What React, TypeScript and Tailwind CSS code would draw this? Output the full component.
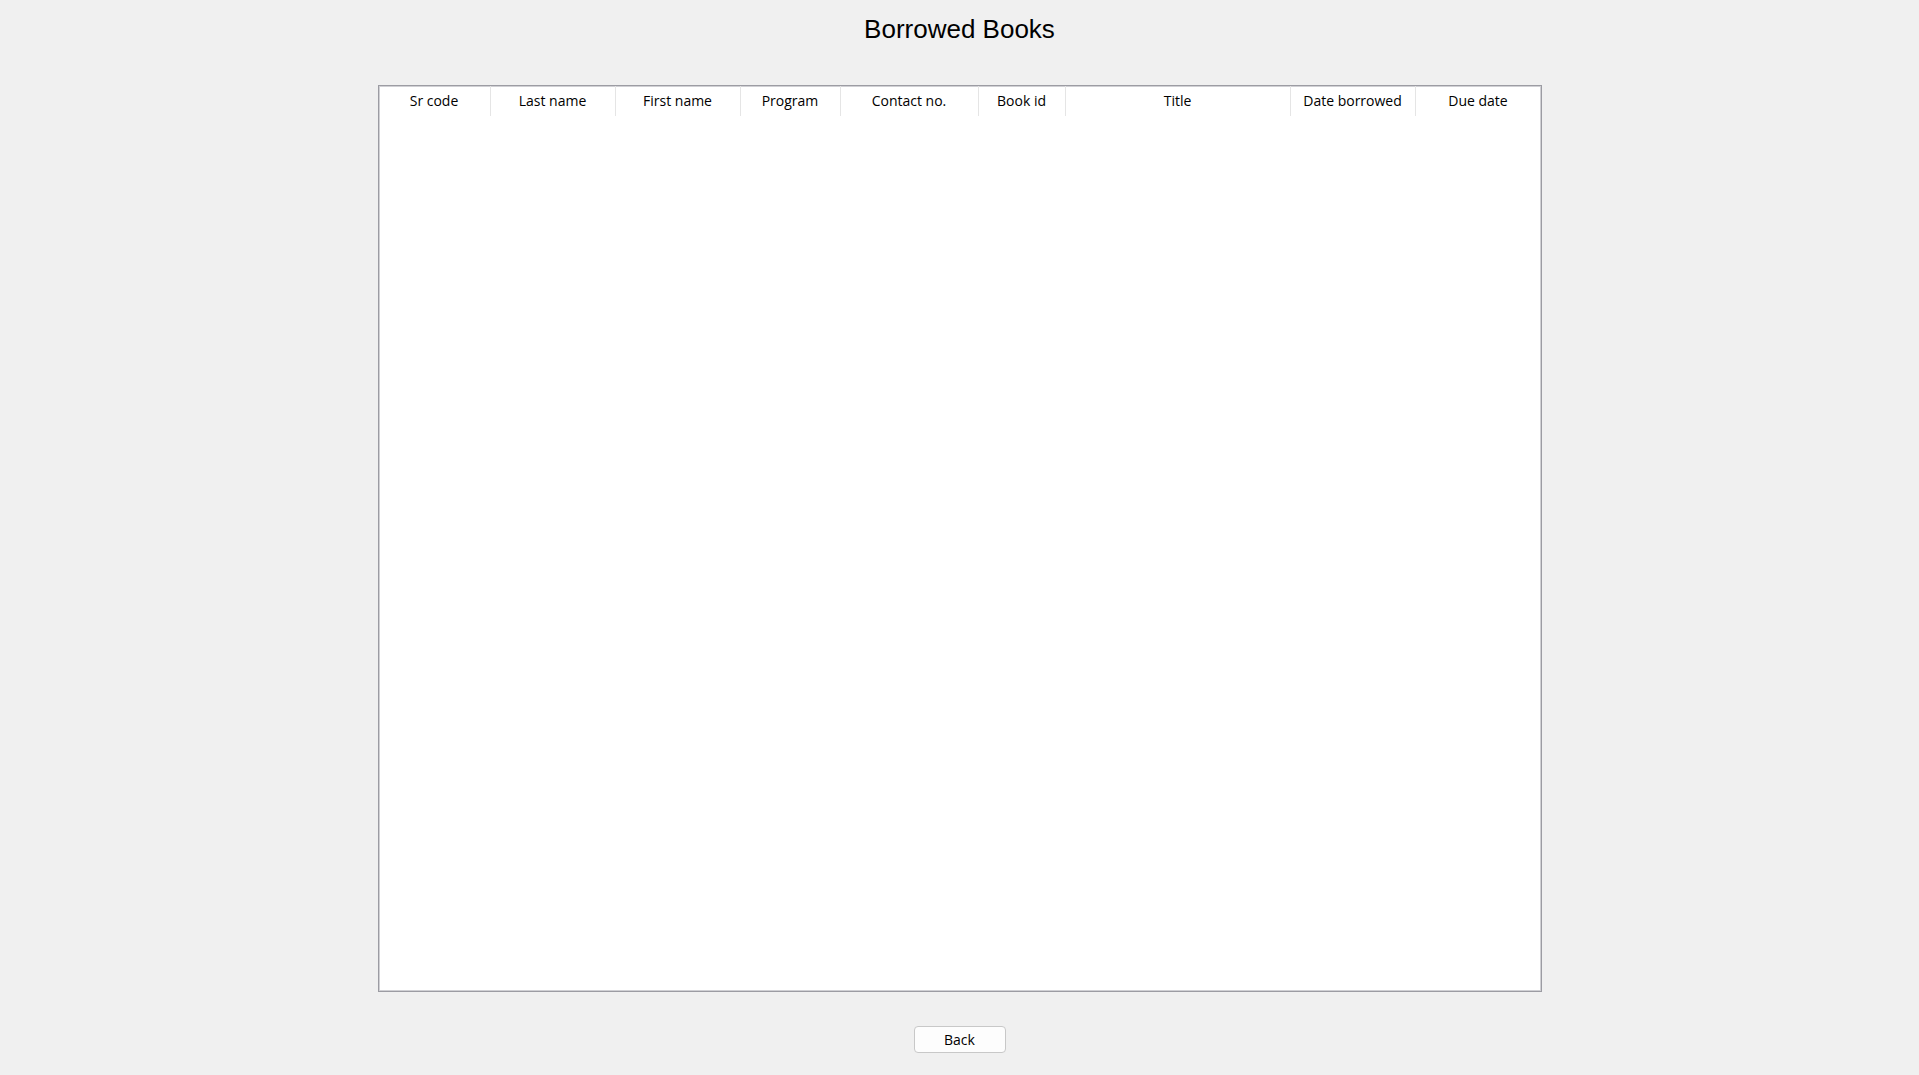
const columns = [
  "Sr code",
  "Last name",
  "First name",
  "Program",
  "Contact no.",
  "Book id",
  "Title",
  "Date borrowed",
  "Due date",
];

const App = () => {
  return (
    <div className="min-h-screen w-full bg-[#f0f0f0] flex flex-col items-center font-['Open_Sans',sans-serif]">
      <div className="h-[85px] pt-[16px]">
        <h1 className="font-['Liberation_Sans',Arial,sans-serif] text-[26px] leading-[26px] text-black">
          Borrowed Books
        </h1>
      </div>

      <div className="w-[1164px] h-[907px] bg-white border border-[#9c9ca3] shadow-[inset_0_0_0_1px_#d0d0d4]">
        <div className="grid grid-cols-[112px_125px_125px_100px_138px_87px_225px_125px_125px] h-[30px]">
          {columns.map((col, i) => (
            <div
              key={col}
              className={
                i < columns.length - 1
                  ? "border-r border-[#e5e5e5] text-center text-[14px] leading-[29px] text-black"
                  : "text-center text-[14px] leading-[29px] text-black"
              }
            >
              {col}
            </div>
          ))}
        </div>
      </div>

      <button className="mt-[34px] w-[92px] h-[27px] rounded-[4px] border border-[#c8c8c8] bg-[#fdfdfd] text-[14px] leading-[25px] text-black">
        Back
      </button>
    </div>
  );
};

export default App;
